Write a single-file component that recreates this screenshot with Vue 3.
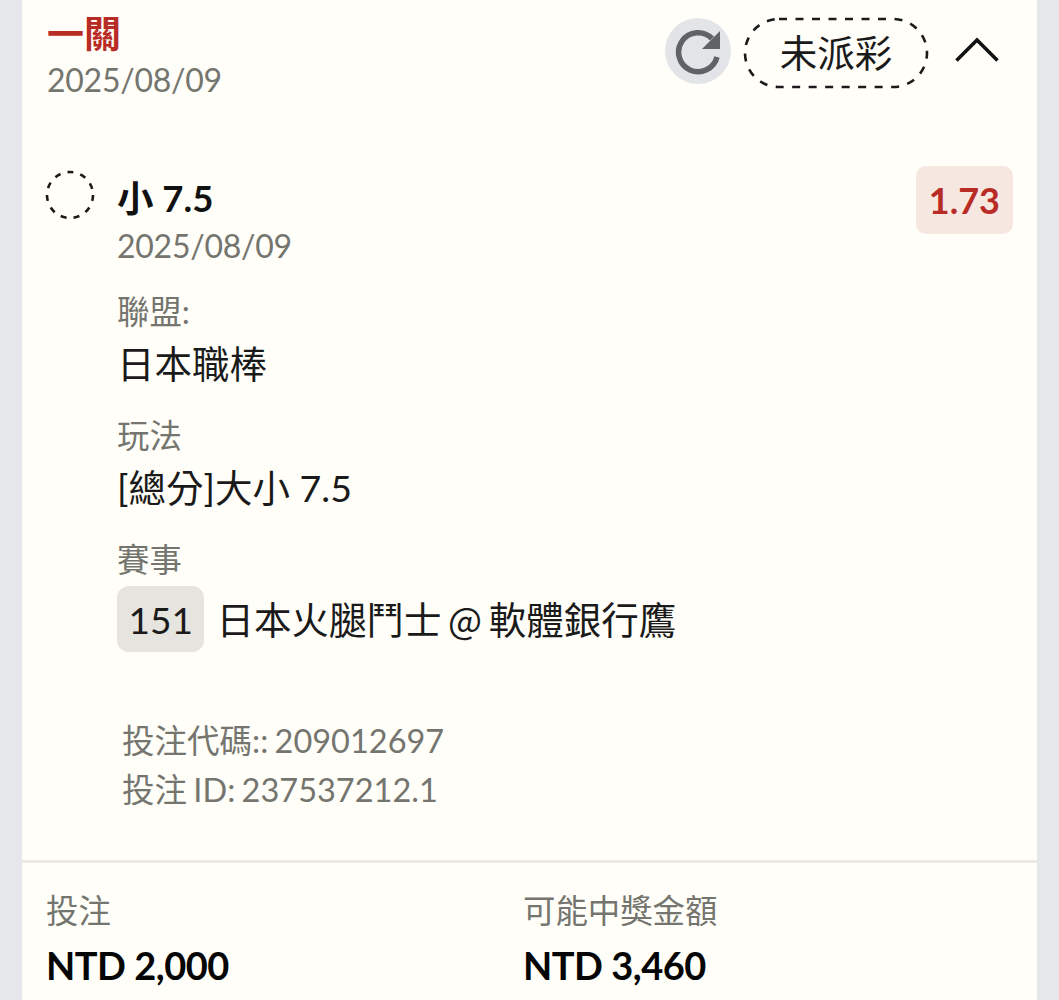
<template>
  <div class="page">
    <div class="card">
      <header class="head">
        <div class="head-left">
          <div class="title">一關</div>
          <div class="date">2025/08/09</div>
        </div>
        <div class="head-right">
          <div class="refresh">
            <svg width="48" height="48" viewBox="0 0 48 48">
              <path d="M43 30A19.5 19.5 0 1 1 38 11.5" fill="none" stroke="#5f6266" stroke-width="5.5" />
              <path d="M46 4v18H28z" fill="#5f6266" />
            </svg>
          </div>
          <svg class="pill" width="186" height="74" viewBox="0 0 186 74">
            <rect x="2" y="3" width="182" height="68" rx="34" fill="none" stroke="#1a1a1a" stroke-width="2.6" stroke-dasharray="8 8.5" />
            <text x="93" y="51" text-anchor="middle" class="pill-text">未派彩</text>
          </svg>
          <svg class="chev" width="44" height="28" viewBox="0 0 44 28">
            <path d="M1.5 24.5 22 4l20.5 20.5" fill="none" stroke="#111" stroke-width="3.6" />
          </svg>
        </div>
      </header>

      <section class="bet">
        <svg class="status" width="50" height="50" viewBox="0 0 50 50">
          <circle cx="25" cy="25" r="23" fill="none" stroke="#1a1a1a" stroke-width="2.6" stroke-dasharray="6 7.14" />
        </svg>
        <div class="bet-body">
          <div class="bet-top">
            <div>
              <div class="pick">小 7.5</div>
              <div class="date">2025/08/09</div>
            </div>
            <div class="odds">1.73</div>
          </div>
          <div class="field" v-for="f in fields" :key="f.label">
            <div class="label">{{ f.label }}</div>
            <div class="value">{{ f.value }}</div>
          </div>
          <div class="field">
            <div class="label">賽事</div>
            <div class="match">
              <span class="code">151</span>
              <span class="value">日本火腿鬥士 <span class="at">@</span> 軟體銀行鷹</span>
            </div>
          </div>
        </div>
      </section>

      <div class="ids">
        <div>投注代碼:: 209012697</div>
        <div>投注 ID: 237537212.1</div>
      </div>

      <footer class="foot">
        <div class="foot-col" v-for="t in totals" :key="t.label">
          <div class="label">{{ t.label }}</div>
          <div class="amount">{{ t.value }}</div>
        </div>
      </footer>
    </div>
  </div>
</template>

<script setup>
const fields = [
  { label: '聯盟:', value: '日本職棒' },
  { label: '玩法', value: '[總分]大小 7.5' },
]

const totals = [
  { label: '投注', value: 'NTD 2,000' },
  { label: '可能中獎金額', value: 'NTD 3,460' },
]
</script>

<style>
body {
  background: #e5e7eb;
}
</style>

<style scoped>
.page {
  height: 1000px;
  overflow: hidden;
  padding: 0 22px;
  background: #e5e7eb;
  font-family: Lato, "Noto Sans CJK TC", sans-serif;
  color: #111;
}
.card {
  height: 1000px;
  background: #fffef8;
}
.head {
  display: flex;
  justify-content: space-between;
  padding: 10px 38px 0 25px;
  height: 164px;
  box-sizing: border-box;
}
.title {
  font-size: 37px;
  line-height: 47px;
  font-weight: 700;
  color: #b92c26;
}
.date {
  font-size: 32px;
  line-height: 46px;
  letter-spacing: -0.25px;
  color: #75756f;
}
.head-right {
  display: flex;
  align-items: flex-start;
  padding-top: 8px;
}
.refresh {
  width: 66px;
  height: 66px;
  border-radius: 50%;
  background: #e2e4e8;
  display: flex;
  align-items: center;
  justify-content: center;
}
.pill {
  margin: -2px 0 0 12px;
}
.pill-text {
  font-size: 37.5px;
  fill: #1a1a1a;
}
.chev {
  margin: 18px 0 0 26px;
}
.bet {
  display: flex;
  padding: 5px 24px 0 23px;
}
.status {
  flex: none;
  margin-top: 1px;
}
.bet-body {
  flex: 1;
  margin-left: 22px;
}
.bet-top {
  display: flex;
  justify-content: space-between;
  align-items: flex-start;
  margin-bottom: -2px;
}
.pick {
  font-size: 36.5px;
  line-height: 50px;
  font-weight: 700;
  margin-top: 4px;
}
.odds {
  padding: 0 13px;
  height: 68px;
  line-height: 68px;
  border-radius: 10px;
  background: #f6e7e1;
  color: #b92c26;
  font-size: 36px;
  font-weight: 700;
  margin-top: -3px;
}
.field {
  margin-top: 22px;
}
.label {
  font-size: 32.4px;
  line-height: 46px;
  color: #75756f;
}
.value {
  font-size: 37.5px;
  line-height: 54px;
  color: #1a1a1a;
}
.field > .value {
  margin-top: 2px;
}
.at {
  font-family: "Noto Sans CJK TC", sans-serif;
  font-size: 36px;
  margin: 0 -3px;
}
.match {
  display: flex;
  align-items: center;
  gap: 12px;
  margin-top: 3px;
}
.code {
  padding: 0 11.5px;
  height: 66px;
  line-height: 68px;
  font-size: 37px;
  border-radius: 12px;
  background: #e6e4de;
  color: #1a1a1a;
}
.ids {
  padding: 64px 0 0 100px;
  font-size: 32.5px;
  line-height: 49px;
  word-spacing: -2px;
  color: #75756f;
}
.foot {
  display: flex;
  margin-top: 46px;
  padding: 25px 24px 0;
  border-top: 3px solid #eceae4;
}
.foot-col {
  width: 477px;
}
.amount {
  font-size: 38px;
  line-height: 62px;
  font-weight: 700;
  letter-spacing: -0.5px;
  color: #050505;
}
</style>
